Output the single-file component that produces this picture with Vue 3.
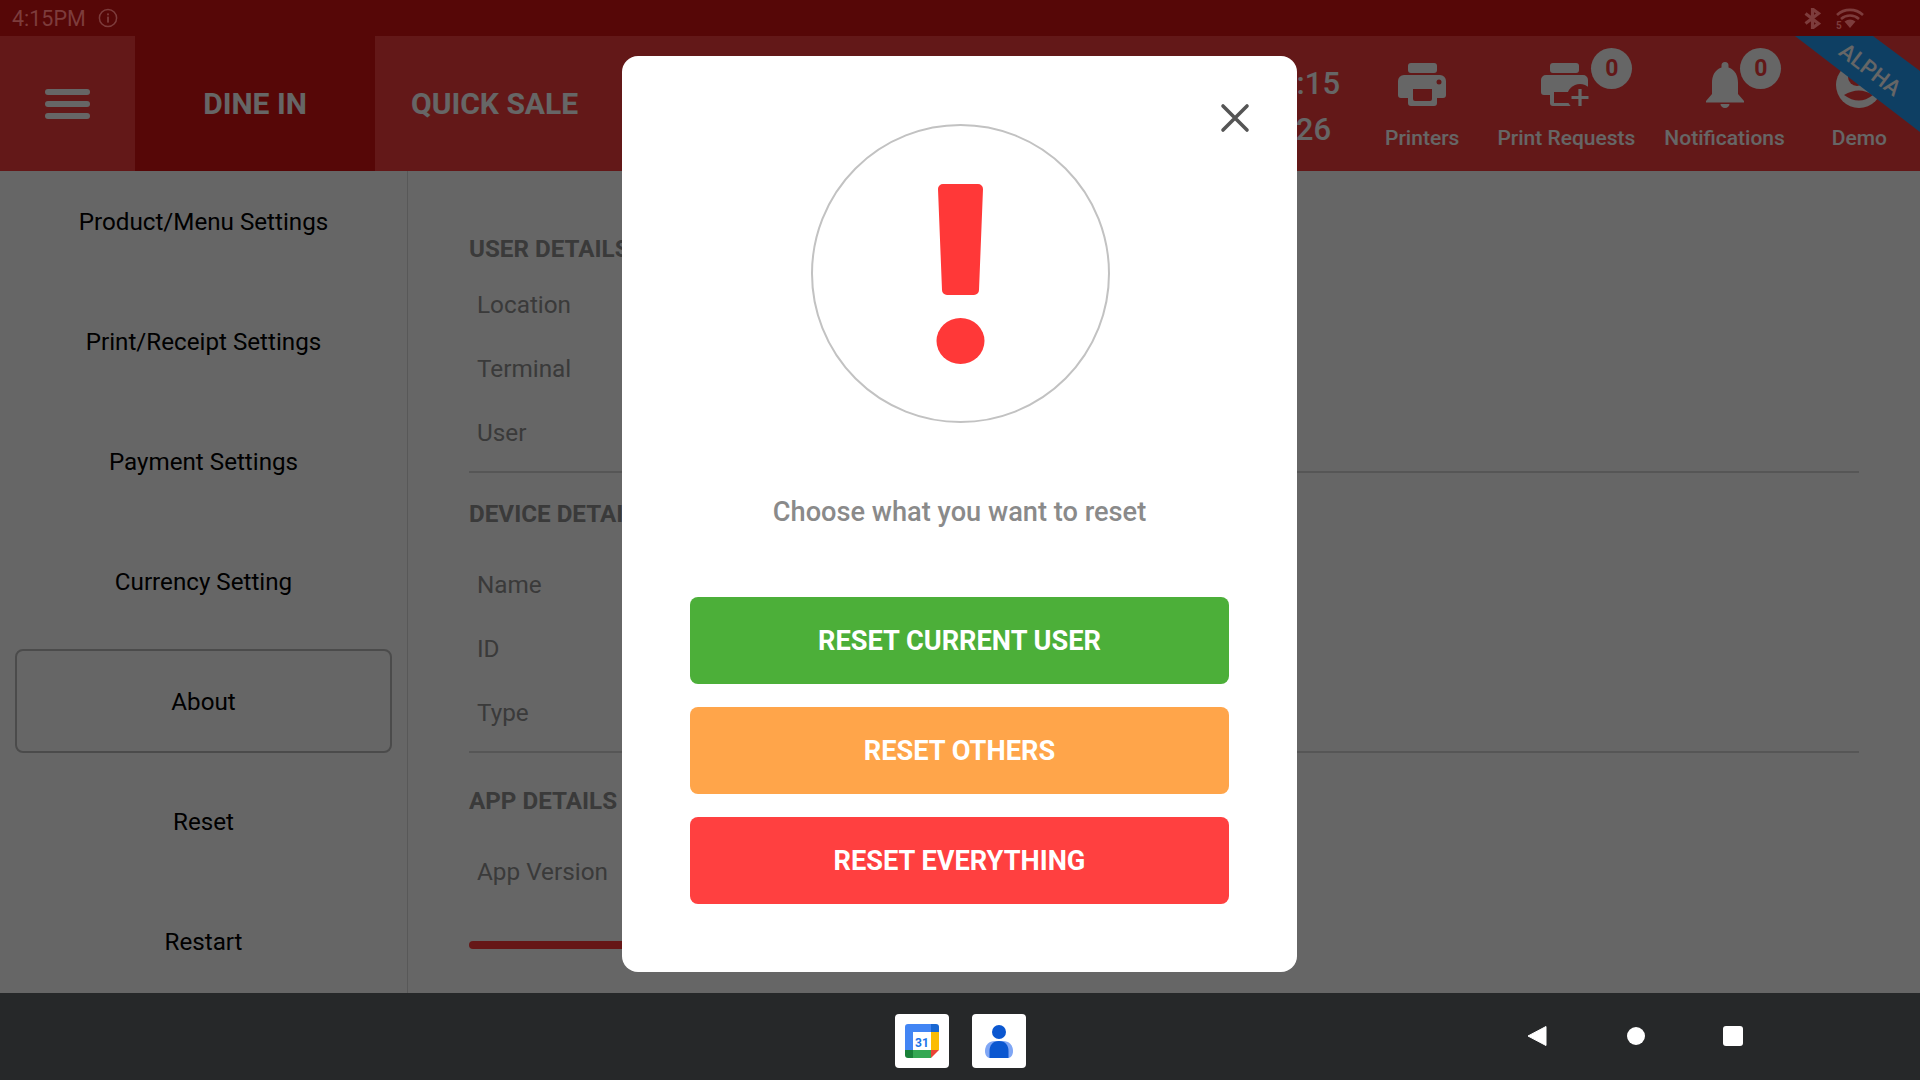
<script setup>
const sideItems = ['Product/Menu Settings','Print/Receipt Settings','Payment Settings','Currency Setting','About','Reset','Restart']
const sections = [
  { title: 'USER DETAILS', rows: ['Location','Terminal','User'], cls: 'sec-user' },
  { title: 'DEVICE DETAILS', rows: ['Name','ID','Type'], cls: 'sec-device' },
  { title: 'APP DETAILS', rows: ['App Version'], cls: 'sec-app' },
]
</script>

<template>
  <div class="screen">
    <div class="stage">
      <div class="status">
        <div class="status-left">
          <span>4:15PM</span>
          <svg width="20" height="20" viewBox="0 0 20 20"><circle cx="10" cy="10" r="8.600" fill="none" stroke="currentColor" stroke-width="1.500"/><rect x="9.100" y="8.600" width="1.800" height="6" fill="currentColor"/><rect x="9.100" y="5.400" width="1.800" height="1.900" fill="currentColor"/></svg>
        </div>
        <div class="status-right">
          <svg width="17" height="21" viewBox="0 0 17 21"><path d="M1.500 5.500l13 10-6 4.500V1l6 4.500-13 10" fill="none" stroke="currentColor" stroke-width="3.200"/></svg>
          <div class="wifi">
            <svg width="28" height="20" viewBox="0 0 28 20"><path d="M1 7a19 19 0 0 1 26 0M5 11a13.500 13.500 0 0 1 18 0" fill="none" stroke="currentColor" stroke-width="2.600"/><path d="M8.500 13.500a9 9 0 0 1 11 0L14 20z" fill="currentColor"/></svg>
            <span class="wifi-5">5</span>
          </div>
        </div>
      </div>

      <header class="header">
        <div class="menu"><i></i><i></i><i></i></div>
        <div class="tab active">DINE IN</div>
        <div class="tab">QUICK SALE</div>
        <div class="head-right">
          <div class="clock"><div>04:15</div><div class="date">01/26</div></div>
          <div class="h-item printers">
            <svg class="h-icon" width="48" height="46" viewBox="0 0 48 46"><rect x="10" y="1" width="29" height="10" rx="3" fill="currentColor"/><path d="M6 13h36a6 6 0 0 1 6 6v14a3 3 0 0 1-3 3h-6v5a3 3 0 0 1-3 3H13a3 3 0 0 1-3-3v-5H3a3 3 0 0 1-3-3V19a6 6 0 0 1 6-6z" fill="currentColor"/><path d="M15 27h19v10a2 2 0 0 1-2 2H17a2 2 0 0 1-2-2z" fill="#f73e3e"/><circle cx="41" cy="20" r="2.500" fill="#f73e3e"/></svg>
            <span>Printers</span>
          </div>
          <div class="h-item requests">
            <svg class="h-icon" width="50" height="46" viewBox="0 0 50 46"><rect x="9" y="1" width="29" height="10" rx="3" fill="currentColor"/><path d="M5 13h37a5 5 0 0 1 5 5v15H39v11H12a3 3 0 0 1-3-3v-8H3a3 3 0 0 1-3-3V18a5 5 0 0 1 5-5z" fill="currentColor"/><circle cx="39" cy="35" r="13" fill="#f73e3e"/><rect x="13" y="30" width="17" height="11" fill="#f73e3e"/><path d="M39 27v17M30.500 35.500h17" stroke="currentColor" stroke-width="3.200" fill="none"/></svg>
            <span>Print Requests</span>
            <b class="badge">0</b>
          </div>
          <div class="h-item notes">
            <svg class="h-icon" width="38" height="46" viewBox="0 0 38 46"><path d="M19 0a3.500 3.500 0 0 1 3.500 3.500v2C29.500 8 32 14 32 21v11l6 7v1.500H0V39l6-7V21C6 14 8.500 8 15.500 5.500v-2A3.500 3.500 0 0 1 19 0z" fill="currentColor"/><path d="M14.500 42h9a4.500 4 0 0 1-9 0z" fill="currentColor"/></svg>
            <span>Notifications</span>
            <b class="badge">0</b>
          </div>
          <div class="h-item demo">
            <svg class="h-icon" width="46" height="46" viewBox="0 0 46 46"><circle cx="23" cy="23" r="23" fill="currentColor"/><circle cx="21" cy="15" r="9" fill="#f73e3e"/><path d="M8 33Q23 24 37 33Q23 44 8 33z" fill="#f73e3e"/></svg>
            <span>Demo</span>
          </div>
        </div>
        <div class="ribbon-box"><span class="ribbon-text">ALPHA</span></div>
      </header>

      <div class="body">
        <nav class="side">
          <div v-for="s in sideItems" :key="s" class="side-item" :class="{ current: s === 'About' }">{{ s }}</div>
        </nav>
        <main class="main">
          <section v-for="sec in sections" :key="sec.title" class="section" :class="sec.cls">
            <h3>{{ sec.title }}</h3>
            <div v-for="r in sec.rows" :key="r" class="row">{{ r }}</div>
          </section>
          <div class="red-bar"></div>
        </main>
      </div>

      <div class="overlay">
        <div class="modal">
          <svg class="close" width="30" height="30" viewBox="0 0 30 30"><path d="M3 3l24 24M27 3L3 27" stroke="#555" stroke-width="3.600" stroke-linecap="round"/></svg>
          <div class="alert">
            <svg width="299" height="299" viewBox="0 0 299 299">
              <circle cx="149.500" cy="149.500" r="148.500" fill="#fff" stroke="#c2c2c2" stroke-width="2"/>
              <path d="M132 60h35a5 5 0 0 1 5 5l-4 101a5 5 0 0 1-5 5h-27a5 5 0 0 1-5-5l-4-101a5 5 0 0 1 5-5z" fill="#ff3838"/>
              <ellipse cx="149.500" cy="217" rx="24" ry="23" fill="#ff3838"/>
            </svg>
          </div>
          <p class="prompt">Choose what you want to reset</p>
          <div class="btns">
            <button class="btn green">RESET CURRENT USER</button>
            <button class="btn orange">RESET OTHERS</button>
            <button class="btn red">RESET EVERYTHING</button>
          </div>
        </div>
      </div>
    </div>

    <footer class="navbar">
      <div class="apps">
        <div class="app">
          <svg width="34" height="34" viewBox="0 0 34 34">
            <path d="M3 0h24v8H8v19H0V3a3 3 0 0 1 3-3z" fill="#4285f4"/>
            <path d="M26 0h5a3 3 0 0 1 3 3v5h-8z" fill="#1967d2"/>
            <rect x="26" y="8" width="8" height="18" fill="#fbbc04"/>
            <rect x="8" y="26" width="18" height="8" fill="#34a853"/>
            <path d="M0 26h8v8H3a3 3 0 0 1-3-3z" fill="#188038"/>
            <path d="M26 26h8l-8 8z" fill="#ea4335"/>
            <text x="17" y="22.500" text-anchor="middle" class="cal">31</text>
          </svg>
        </div>
        <div class="app">
          <svg class="person" width="28" height="33" viewBox="0 0 28 33">
            <circle cx="14" cy="7" r="7" fill="#0b57d0"/>
            <path d="M10 16h8c6 0 10 4 10 10 0 4-2 7-5 7H5c-3 0-5-3-5-7 0-6 4-10 10-10z" fill="#7fa6f5"/>
            <path d="M14 16c6 0 9.500 4 9.500 10v7h-19v-7c0-6 3.500-10 9.500-10z" fill="#0b57d0"/>
          </svg>
        </div>
      </div>
      <div class="sysnav">
        <svg width="20" height="22" viewBox="0 0 20 22"><path d="M19 1.500v19L1 11z" fill="#fff" stroke="#fff" stroke-linejoin="round"/></svg>
        <span class="home"></span>
        <span class="recent"></span>
      </div>
    </footer>
  </div>
</template>

<style scoped>
.screen { width: 1920px; height: 1080px; display: flex; flex-direction: column; overflow: hidden; font-family: Roboto, sans-serif; background: #fff; }
.stage { position: relative; height: 993px; display: flex; flex-direction: column; flex: none; }
.status { position: relative; z-index: 2; height: 36px; flex: none; background: #560707; color: #7d3c3c; display: flex; align-items: center; justify-content: space-between; padding: 0 56px 0 12px; font-size: 21.500px; }
.status-left { display: flex; align-items: center; gap: 12px; }
.status-right { display: flex; align-items: center; gap: 15px; }
.wifi { position: relative; display: flex; }
.wifi-5 { position: absolute; left: 0; bottom: -3px; font-size: 10px; font-weight: 700; }
.header { position: relative; height: 135px; flex: none; background: #f73e3e; color: #fff; display: flex; align-items: stretch; }
.menu { width: 135px; display: flex; flex-direction: column; justify-content: center; align-items: center; gap: 6px; }
.menu i { display: block; width: 45px; height: 6px; border-radius: 3px; background: #fff; }
.tab { display: flex; align-items: center; padding: 0 36px; font-size: 30px; font-weight: 700; }
.tab.active { width: 240px; box-sizing: border-box; justify-content: center; background: #d71212; padding: 0; }
.head-right { margin-left: auto; display: flex; align-items: flex-start; padding-right: 33px; }
.clock { font-size: 31px; font-weight: 500; text-align: right; padding-top: 25px; line-height: 46px; margin-right: 45px; }
.date { margin-right: 9px; }
.h-item { position: relative; display: flex; flex-direction: column; align-items: center; font-size: 21px; font-weight: 500; padding-top: 26px; }
.h-icon { display: block; margin-bottom: 16px; }
.h-item span { line-height: 28px; }
.requests { margin-left: 38px; }
.notes { margin-left: 29px; }
.demo { margin-left: 47px; }
.badge { position: absolute; top: 12px; width: 41px; height: 41px; border-radius: 50%; background: #fff; color: #f73e3e; font-size: 23px; font-weight: 700; display: flex; align-items: center; justify-content: center; }
.requests .badge { left: 94px; }
.notes .badge { left: 76px; }
.ribbon-box { position: absolute; right: 0; top: 0; width: 125px; height: 96px; background: #239ef8; clip-path: polygon(0 0, 78px 0, 125px 35px, 125px 96px); }
.ribbon-text { position: absolute; left: 38px; top: 20px; width: 74px; color: #fff; text-align: center; font-size: 22px; font-weight: 500; line-height: 28px; transform: rotate(37.500deg); }
.body { flex: 1; display: flex; background: #fff; min-height: 0; }
.side { flex: none; width: 377px; border-right: 1px solid #ddd; padding: 0 15px; display: flex; flex-direction: column; gap: 16px; }
.side-item { height: 104px; flex: none; display: flex; align-items: center; justify-content: center; padding-top: 2px; color: #000; font-size: 24.200px; box-sizing: border-box; border-radius: 8px; }
.side-item:first-child { margin-top: -2px; }
.side-item.current { border: 2px solid #bbb; }
.main { flex: 1; padding: 0 61px; color: #919191; }
.section { border-bottom: 2px solid #d8d8d8; box-sizing: border-box; }
.section h3 { margin: 0; font-size: 24.200px; font-weight: 700; line-height: 30px; }
.row { padding-left: 8px; font-size: 24.300px; line-height: 30px; margin-top: 34px; }
.sec-user { padding-top: 63px; height: 302px; }
.sec-user h3 + .row { margin-top: 26px; }
.sec-device { padding-top: 26px; height: 280px; }
.sec-device h3 + .row { margin-top: 41px; }
.sec-app { border-bottom: none; padding-top: 33px; height: 188px; }
.sec-app h3 + .row { margin-top: 41px; }
.red-bar { height: 8px; width: 400px; border-radius: 4px; background: #ff3a3a; }
.overlay { position: absolute; inset: 0; background: rgba(0,0,0,.6); display: flex; justify-content: center; align-items: flex-start; padding: 56px 1px 0 0; box-sizing: border-box; }
.modal { position: relative; width: 675px; height: 916px; box-sizing: border-box; background: #fff; border-radius: 16px; padding: 68px 68px 0; display: flex; flex-direction: column; align-items: stretch; }
.close { position: absolute; left: 598px; top: 47px; }
.alert { display: flex; justify-content: center; padding-left: 1px; }
.alert svg { display: block; }
.prompt { margin: 72px 0 0; text-align: center; font-size: 27.200px; font-weight: 500; line-height: 34px; color: #8a8a8a; }
.btns { margin-top: 68px; display: flex; flex-direction: column; gap: 23px; }
.btn { height: 87px; border: 0; border-radius: 8px; color: #fff; font-family: Roboto, sans-serif; font-size: 27.200px; font-weight: 700; }
.green { background: #4caf39; }
.orange { background: #ffa54a; }
.red { background: #ff4040; }
.navbar { height: 87px; flex: none; background: #262829; position: relative; display: flex; align-items: center; }
.apps { position: absolute; left: 895px; top: 21px; display: flex; gap: 23px; }
.app { width: 54px; height: 54px; background: #fff; border-radius: 4px; display: flex; align-items: center; justify-content: center; }
.cal { font: 700 12px Roboto, sans-serif; fill: #1a73e8; }
.sysnav { position: absolute; left: 1527px; top: 32px; display: flex; align-items: center; }
.home { width: 18px; height: 18px; border-radius: 50%; background: #fff; margin-left: 80px; }
.recent { width: 20px; height: 20px; border-radius: 3px; background: #fff; margin-left: 78px; }
</style>
